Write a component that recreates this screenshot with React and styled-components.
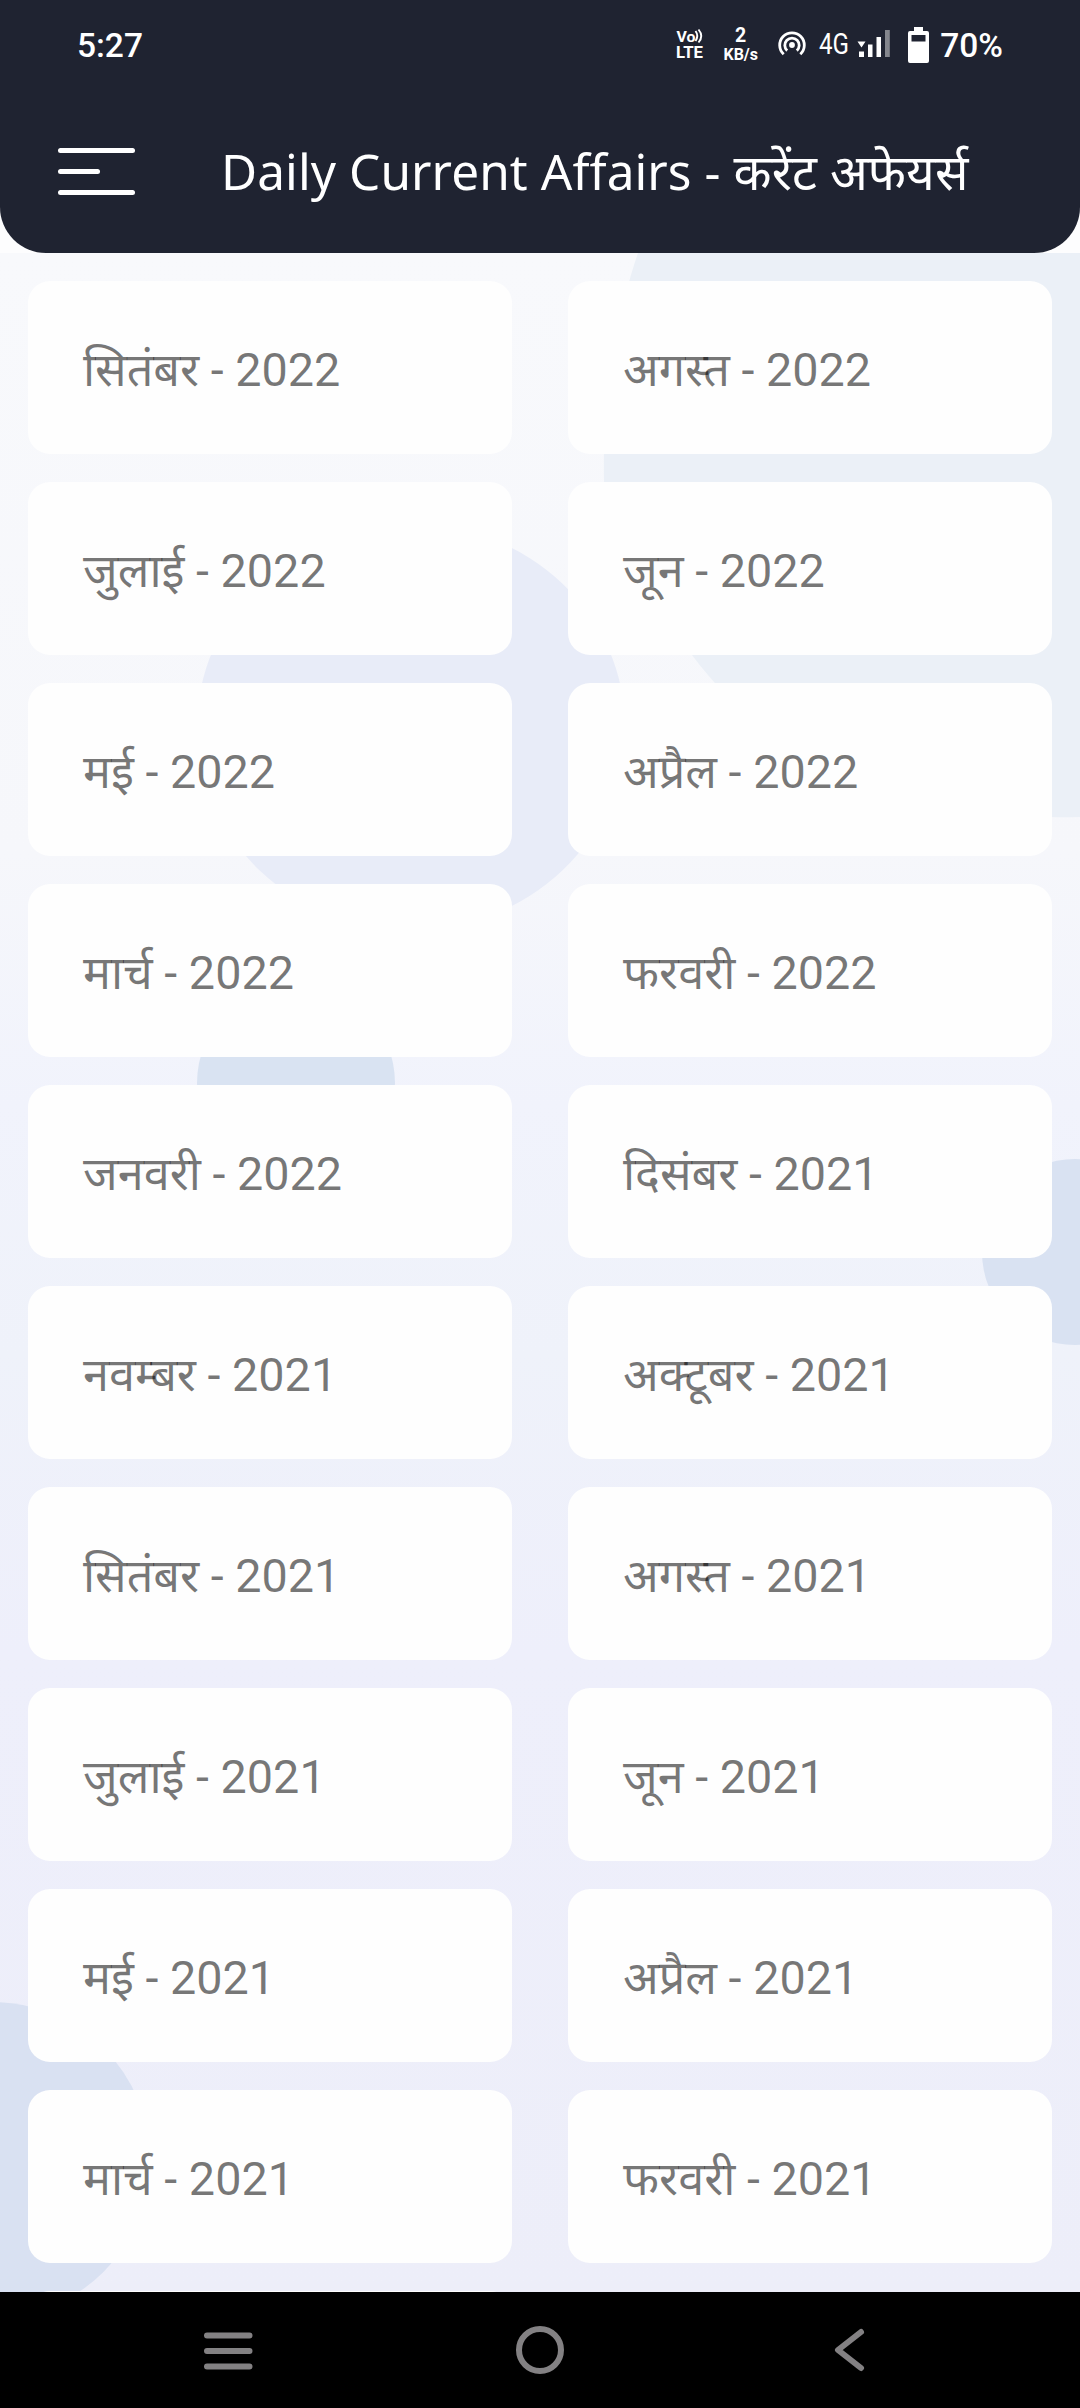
import React from 'react';
import styled, { createGlobalStyle } from 'styled-components';

const GlobalStyle = createGlobalStyle`
  *, *::before, *::after { box-sizing: border-box; }
  body { margin: 0; background: #fff; }
`;

const Screen = styled.div`
  display: flex;
  flex-direction: column;
  width: 1080px;
  height: 2408px;
  overflow: hidden;
  background: #fdfdfe;
  font-family: Roboto, 'Noto Sans', 'Noto Sans Devanagari', sans-serif;
`;

const Header = styled.header`
  display: flex;
  flex-direction: column;
  height: 253px;
  flex: none;
  background: #1f2331;
  color: #fff;
  border-radius: 0 0 46px 46px;
`;

const StatusBar = styled.div`
  display: flex;
  align-items: center;
  justify-content: space-between;
  height: 90px;
  padding: 0 77px;
`;

const StatusText = styled.span`
  padding-top: 1px;
  font-size: 33.5px;
  line-height: 38px;
  font-weight: 500;
`;

const StatusIcons = styled.div`
  display: flex;
  align-items: center;
`;

const StatusGlyph = styled.svg`
  display: block;
  flex: none;
  overflow: visible;
  margin-right: ${(p) => p.$gap}px;
`;

const AppBar = styled.div`
  display: flex;
  align-items: center;
  height: 163px;
  padding: 0 58px;
`;

const MenuButton = styled.button`
  display: flex;
  flex-direction: column;
  justify-content: space-between;
  width: 77px;
  height: 47px;
  padding: 0;
  margin: 0 86px 0 0;
  border: 0;
  background: none;
`;

const MenuLine = styled.span`
  width: ${(p) => p.$width}px;
  height: 5px;
  border-radius: 3px;
  background: #fff;
`;

const Title = styled.h1`
  margin: 0;
  padding-bottom: 2px;
  font-family: 'Noto Sans', 'Noto Sans Devanagari', sans-serif;
  font-size: 49.5px;
  line-height: 68px;
  font-weight: 400;
  letter-spacing: 0.08px;
  white-space: nowrap;
`;

const Content = styled.main`
  position: relative;
  height: 2039px;
  flex: none;
  overflow: hidden;
  background: linear-gradient(#f8f9fc 0, #f6f7fb 600px, #f1f3fc 850px, #eff2fa 1100px, #eeeffb 1400px, #edeef9 100%);
`;

const Backdrop = styled.svg`
  position: absolute;
  inset: 0;
`;

const MonthGrid = styled.div`
  position: relative;
  display: grid;
  grid-template-columns: 484px 484px;
  grid-auto-rows: 173px;
  gap: 28px 56px;
  padding: 28px;
`;

const MonthCard = styled.div`
  display: flex;
  align-items: center;
  padding: 4px 0 0 55px;
  border-radius: 22px;
  background: #fefefe;
  color: rgba(0, 0, 0, 0.54);
  font-size: 46.75px;
  line-height: 62px;
  white-space: nowrap;
`;

const NavBar = styled.nav`
  display: flex;
  align-items: center;
  justify-content: space-between;
  height: 116px;
  flex: none;
  padding: 0 214px 0 203px;
  background: #000;
`;

const NavIcon = styled.svg`
  display: block;
  overflow: visible;
  fill: none;
  stroke: #838183;
  stroke-width: 6;
  stroke-linecap: round;
  stroke-linejoin: round;
`;

const months = [
  'सितंबर - 2022', 'अगस्त - 2022',
  'जुलाई - 2022', 'जून - 2022',
  'मई - 2022', 'अप्रैल - 2022',
  'मार्च - 2022', 'फरवरी - 2022',
  'जनवरी - 2022', 'दिसंबर - 2021',
  'नवम्बर - 2021', 'अक्टूबर - 2021',
  'सितंबर - 2021', 'अगस्त - 2021',
  'जुलाई - 2021', 'जून - 2021',
  'मई - 2021', 'अप्रैल - 2021',
  'मार्च - 2021', 'फरवरी - 2021',
];

function VolteIcon() {
  return (
    <StatusGlyph width="28" height="36" $gap={19} fontFamily="Roboto, sans-serif" fontWeight="700" fill="#fff">
      <text x="0.5" y="14.500" fontSize="15.500" textLength="19" lengthAdjust="spacingAndGlyphs">Vo</text>
      <path d="M19.500 4q3.500 4.700 0 10M22.500 2.500q5.500 6.500 0 13" fill="none" stroke="#fff" strokeWidth="1.9" />
      <text x="0" y="30.500" fontSize="17.300" textLength="27" lengthAdjust="spacingAndGlyphs">LTE</text>
    </StatusGlyph>
  );
}

function SpeedIcon() {
  return (
    <StatusGlyph width="36" height="40" $gap={19} fontFamily="Roboto, sans-serif" fontWeight="700" fill="#fff">
      <text x="17.500" y="17" fontSize="19.500" textAnchor="middle">2</text>
      <text x="0.5" y="35.200" fontSize="17" textLength="34.500" lengthAdjust="spacingAndGlyphs">KB/s</text>
    </StatusGlyph>
  );
}

function HotspotIcon() {
  return (
    <StatusGlyph width="28" height="28" $gap={13} fill="none" stroke="#fff" strokeWidth="2.8">
      <circle cx="14" cy="14" r="2.9" fill="#fff" stroke="none" />
      <path d="M9.200 19.600A7.200 7.200 0 1 1 18.800 19.600" />
      <path d="M5.700 23.200A12.300 12.300 0 1 1 22.300 23.200" />
    </StatusGlyph>
  );
}

function NetworkIcon() {
  return (
    <StatusGlyph width="71" height="32" $gap={18} fill="#fff">
      <text x="0" y="24.600" fontSize="28.800" fontFamily="Roboto, sans-serif" textLength="30" lengthAdjust="spacingAndGlyphs">4G</text>
      <path d="M38.500 12.500h8l-4 6zM40 22.500h5v5.500h-5zM49 15.500h4.500v12.500h-4.500zM57.500 8h4.500V28h-4.500z" />
      <path d="M66 1h4.800v27h-4.800z" opacity="0.45" />
    </StatusGlyph>
  );
}

function BatteryIcon() {
  return (
    <StatusGlyph width="21" height="36" $gap={11}>
      <path fill="#fff" fillRule="evenodd" d="M6 0h9v4h4a2 2 0 0 1 2 2v28a2 2 0 0 1-2 2H2a2 2 0 0 1-2-2V6a2 2 0 0 1 2-2h4zM3.500 8v6.500h14V8z" />
    </StatusGlyph>
  );
}

export default function App() {
  return (
    <Screen>
      <GlobalStyle />
      <Header>
        <StatusBar>
          <StatusText>5:27</StatusText>
          <StatusIcons>
            <VolteIcon />
            <SpeedIcon />
            <HotspotIcon />
            <NetworkIcon />
            <BatteryIcon />
            <StatusText>70%</StatusText>
          </StatusIcons>
        </StatusBar>
        <AppBar>
          <MenuButton aria-label="Menu">
            <MenuLine $width={77} />
            <MenuLine $width={42} />
            <MenuLine $width={77} />
          </MenuButton>
          <Title>Daily Current Affairs - करेंट अफेयर्स</Title>
        </AppBar>
      </Header>
      <Content>
        <Backdrop width="1080" height="2039" viewBox="0 253 1080 2039">
          <path d="M638 253C618 310 602 400 604 482C612 560 650 605 692 655C770 760 900 822 1080 817V253Z" fill="#ebf0f7" />
          <ellipse cx="411" cy="727" rx="214" ry="203" fill="#e8ecf8" />
          <circle cx="296" cy="1083" r="99" fill="#d9e3f2" />
          <circle cx="1075" cy="1252" r="93" fill="#d9e2f2" />
          <circle cx="-8" cy="2160" r="158" fill="#d9e1f2" />
        </Backdrop>
        <MonthGrid>
          {months.map((month) => (
            <MonthCard key={month}>{month}</MonthCard>
          ))}
          <MonthCard />
        </MonthGrid>
      </Content>
      <NavBar>
        <NavIcon width="45" height="46">
          <path d="M4 8.500h42.500M4 24h42.500M4 39.500h42.500" />
        </NavIcon>
        <NavIcon width="50" height="50">
          <circle cx="25" cy="25" r="21" />
        </NavIcon>
        <NavIcon width="34" height="50">
          <path d="M29 7L6 25L29 43" />
        </NavIcon>
      </NavBar>
    </Screen>
  );
}
